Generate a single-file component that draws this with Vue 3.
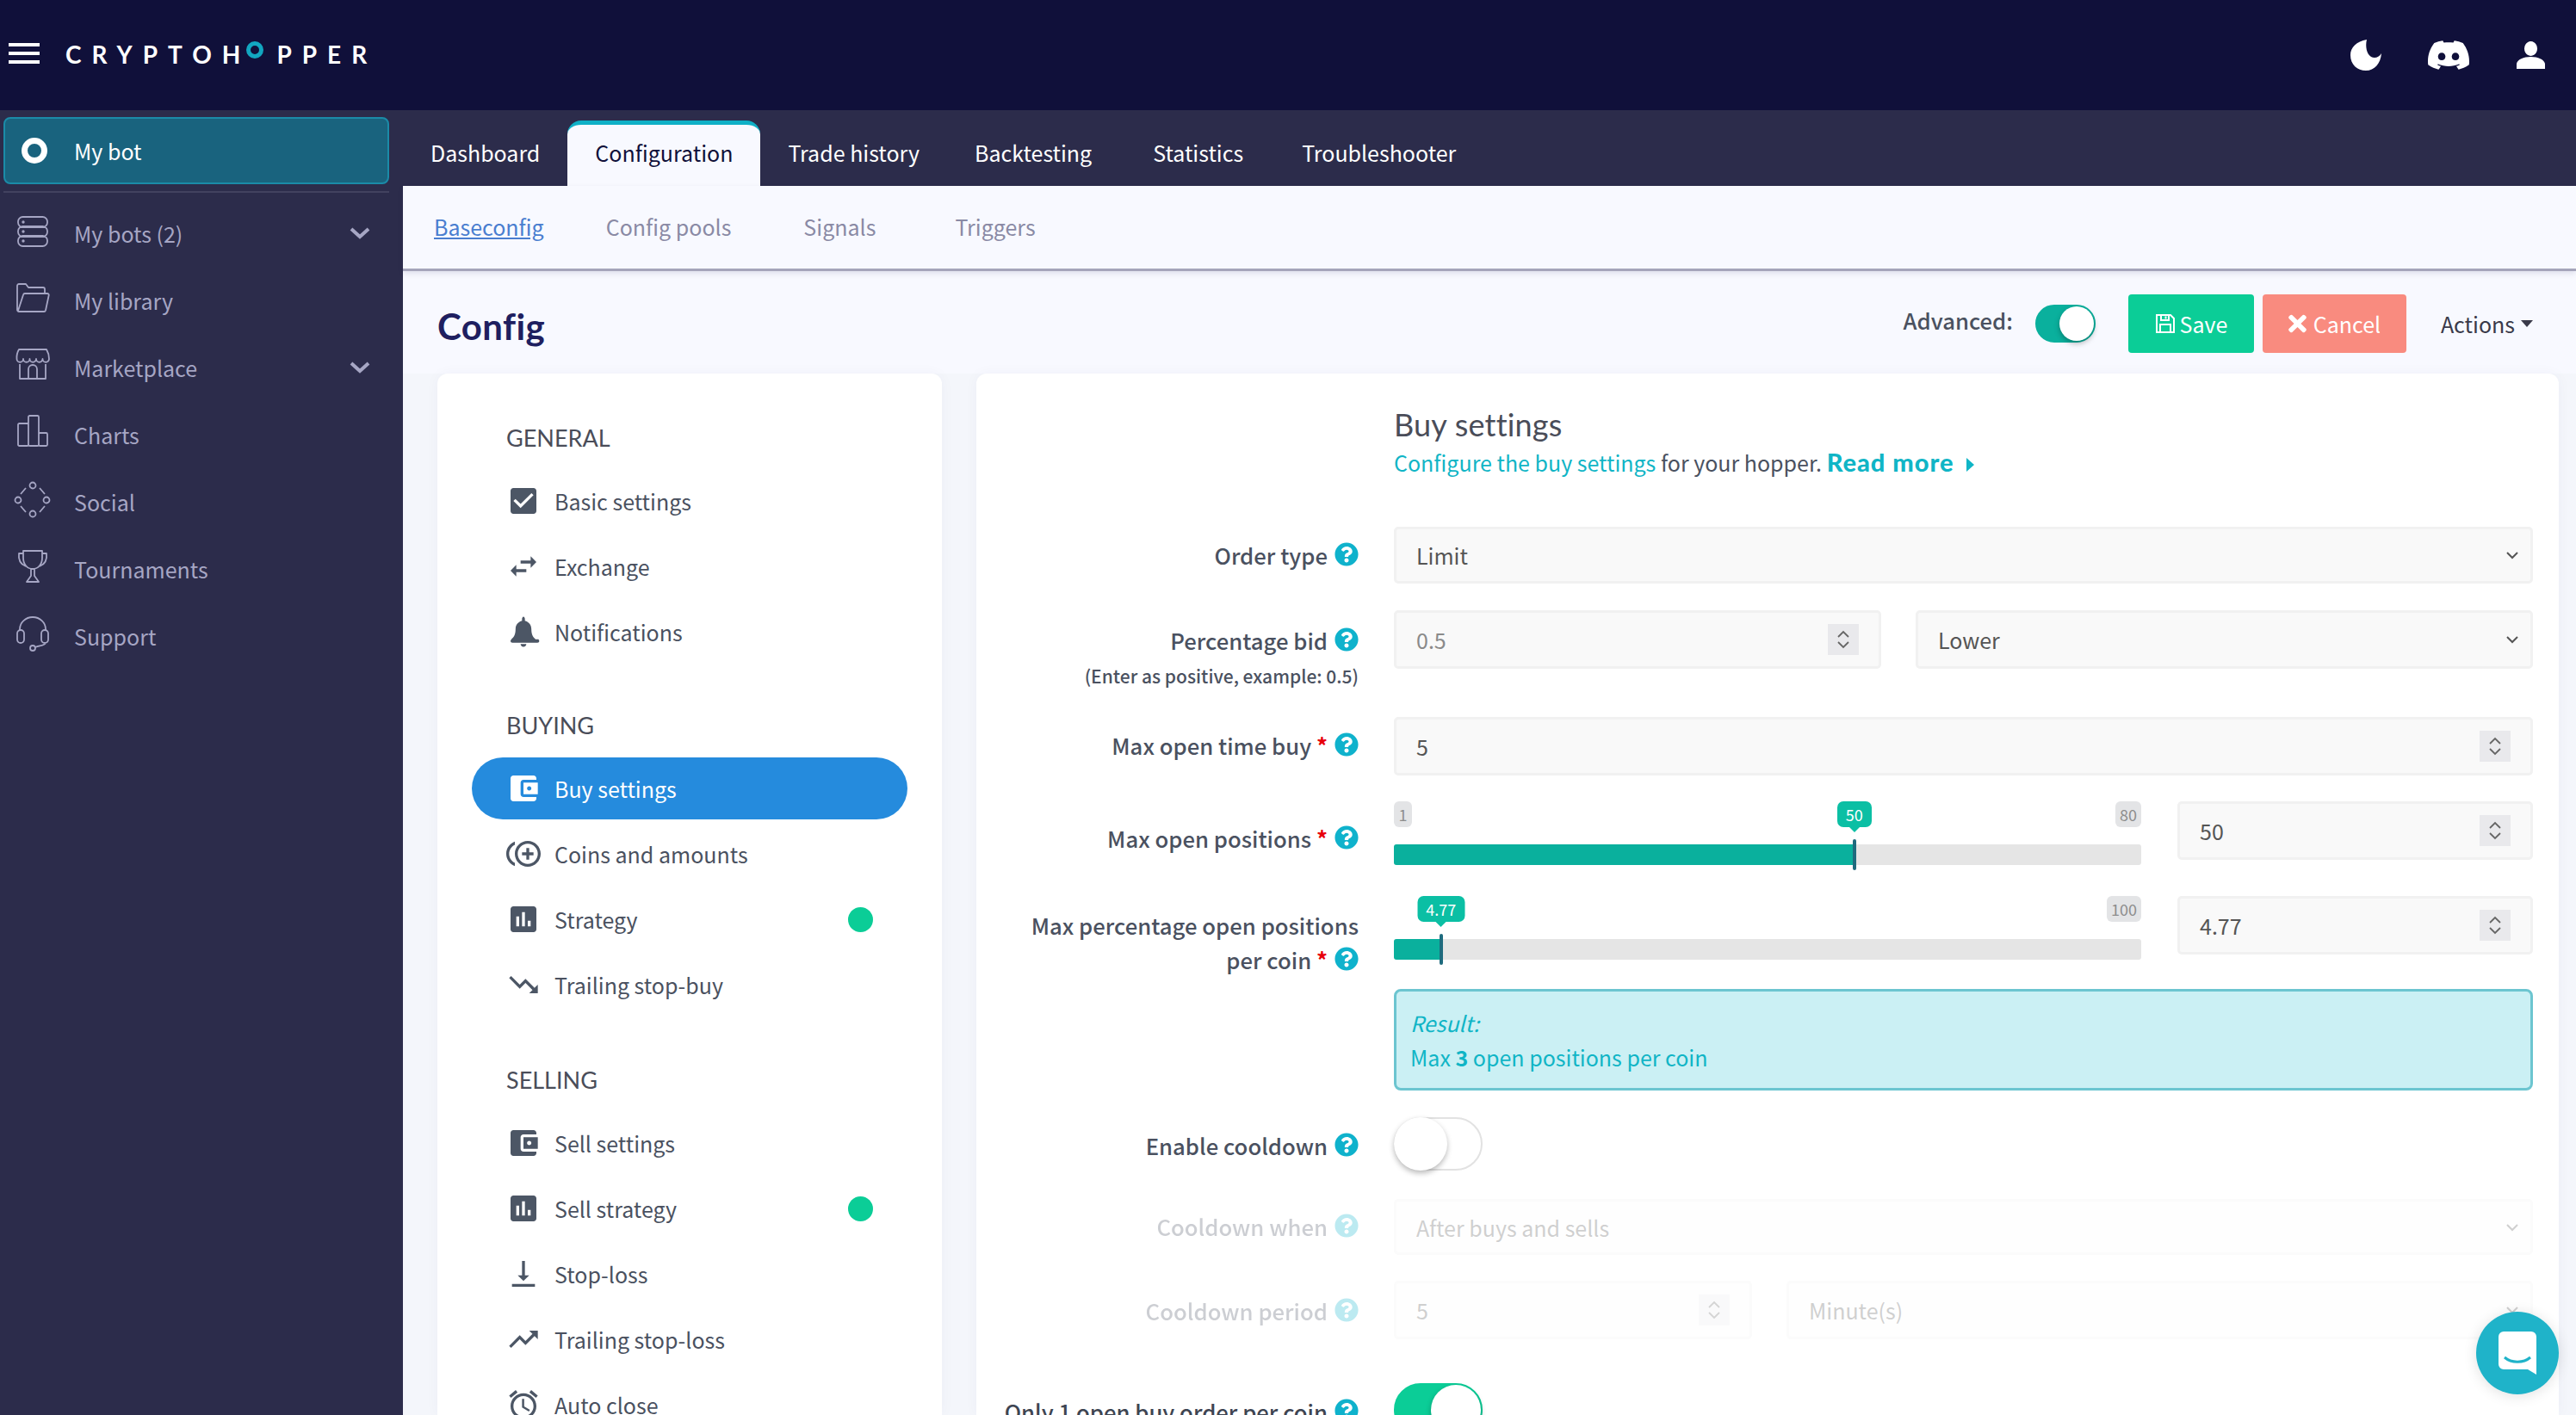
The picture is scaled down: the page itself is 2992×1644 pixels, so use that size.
<script setup>
const dot = (x, y, r) => `M${x - r} ${y}a${r} ${r} 0 1 0 ${2 * r} 0a${r} ${r} 0 1 0 ${-2 * r} 0Z`
const box = (x, y, w, h, r) =>
  `M${x + r} ${y}h${w - 2 * r}a${r} ${r} 0 0 1 ${r} ${r}v${h - 2 * r}a${r} ${r} 0 0 1 ${-r} ${r}h${2 * r - w}a${r} ${r} 0 0 1 ${-r} ${-r}v${2 * r - h}a${r} ${r} 0 0 1 ${r} ${-r}Z`

const sideItems = [
  {
    label: 'My bots (2)',
    more: true,
    d: box(3, 4, 34, 12, 5.5) + box(3, 15, 34, 12, 5.5) + box(3, 26, 34, 12, 5.5) + dot(9, 10, 0.8) + dot(9, 21, 0.8) + dot(9, 32, 0.8)
  },
  {
    label: 'My library',
    d: 'M4 36a2 2 0 0 1-2-2V6a2 2 0 0 1 2-2H12l3 4H32a2 2 0 0 1 2 2v5M4 36H33a2 2 0 0 0 2-1.500L38.500 18a2 2 0 0 0-2-3H11a2 2 0 0 0-2 1.500L3 35'
  },
  {
    label: 'Marketplace',
    more: true,
    d: 'M4 2H36Q39 7 39 13a3.750 3.750 0 0 1-7.500 0a3.750 3.750 0 0 1-7.500 0a3.750 3.750 0 0 1-7.500 0a3.750 3.750 0 0 1-7.500 0a3.750 3.750 0 0 1-7.500 0Q1 7 4 2ZM5 19V36H35V19M15 36V25a5 5 0 0 1 10 0V36'
  },
  {
    label: 'Charts',
    d: box(3, 10, 12, 26, 1.500) + box(15, 1, 12, 35, 1.500) + box(27, 21, 10, 15, 1.500)
  },
  {
    label: 'Social',
    d: dot(20, 4, 3.500) + dot(20, 37, 3.500) + dot(3, 21, 3.500) + dot(36, 21, 3.500) + 'M6 14L12 7M28 7L34 14M6 28L12 35M28 35L34 28'
  },
  {
    label: 'Tournaments',
    d: 'M9 2H31V10C31 18 26 23 20 23C14 23 9 18 9 10ZM9 5H4C3 13 7 18 12 20M31 5H36C37 13 33 18 28 20M18 23V31L13 38H27L22 31V23M13 38H27'
  },
  {
    label: 'Support',
    d: 'M5 17V15a15 14 0 0 1 30 0V17' + box(2, 16, 8, 15, 4) + box(30, 16, 8, 15, 4) + 'M35 31C34 34 28 34 23 36' + dot(20, 37, 3)
  }
]

const icons = {
  check: 'M19 3H5c-1.110 0-2 .9-2 2v14c0 1.100.89 2 2 2h14c1.110 0 2-.9 2-2V5c0-1.100-.89-2-2-2zm-9 14l-5-5 1.410-1.410L10 14.170l7.590-7.590L19 8l-9 9z',
  swap: 'M6.990 11L3 15l3.990 4v-3H14v-2H6.990v-3zM21 9l-3.990-4v3H10v2h7.010v3L21 9z',
  bell: 'M12 22.500c1.100 0 2-.9 2-2h-4c0 1.100.9 2 2 2zm8.400-5.300C19 15.800 17.500 14.500 17.500 10c0-2.800-2-5-4.500-5.600V3c0-.6-.4-1.500-1-1.500s-1 .9-1 1.500v1.400C8.500 5 6.500 7.200 6.500 10c0 4.500-1.500 5.800-2.900 7.200-.3.3-.6.8-.6 1.300 0 .6.500 1.200 1.300 1.200h17.400c.8 0 1.300-.6 1.300-1.200 0-.5-.3-1-.6-1.300z',
  wallet: 'M21 18v1c0 1.100-.9 2-2 2H5c-1.110 0-2-.9-2-2V5c0-1.100.89-2 2-2h14c1.100 0 2 .9 2 2v1h-9c-1.110 0-2 .9-2 2v8c0 1.100.9 2 2 2h9zm-9-2h10V8H12v8zm4-2.500c-.83 0-1.500-.67-1.500-1.500s.67-1.500 1.500-1.500 1.500.67 1.500 1.500-.67 1.500-1.500 1.500z',
  coins: 'M16 8h-2v3h-3v2h3v3h2v-3h3v-2h-3zM2 12c0-2.790 1.640-5.200 4.010-6.320V3.520C2.520 4.760 0 8.090 0 12s2.520 7.240 6.010 8.480v-2.160C3.640 17.200 2 14.790 2 12zm13-9c-4.960 0-9 4.040-9 9s4.040 9 9 9 9-4.040 9-9-4.040-9-9-9zm0 16c-3.860 0-7-3.140-7-7s3.140-7 7-7 7 3.140 7 7-3.140 7-7 7z',
  chart: 'M19 3H5c-1.100 0-2 .9-2 2v14c0 1.100.9 2 2 2h14c1.100 0 2-.9 2-2V5c0-1.100-.9-2-2-2zM9 17H7v-7h2v7zm4 0h-2V7h2v10zm4 0h-2v-4h2v4z',
  down: 'M16 18l2.290-2.290-4.880-4.880-4 4L2 7.410 3.410 6l6 6 4-4 6.300 6.290L22 12v6z',
  up: 'M16 6l2.290 2.290-4.880 4.880-4-4L2 16.590 3.410 18l6-6 4 4 6.300-6.290L22 12V6z',
  stop: 'M16 13h-3V3h-2v10H8l4 4 4-4zM4 19v2h16v-2H4z',
  alarm: 'M22 5.720l-4.600-3.860-1.290 1.530 4.600 3.860L22 5.720zM7.880 3.390L6.600 1.860 2 5.710l1.290 1.530 4.590-3.850zM12.500 8H11v6l4.750 2.850.75-1.230-4-2.370V8zM12 4c-4.970 0-9 4.030-9 9s4.030 9 9 9c4.970 0 9-4.030 9-9s-4.030-9-9-9zm0 16c-3.870 0-7-3.130-7-7s3.130-7 7-7 7 3.130 7 7-3.130 7-7 7z'
}

const menuGroups = [
  {
    title: 'GENERAL',
    items: [
      { label: 'Basic settings', icon: 'check' },
      { label: 'Exchange', icon: 'swap' },
      { label: 'Notifications', icon: 'bell' }
    ]
  },
  {
    title: 'BUYING',
    items: [
      { label: 'Buy settings', icon: 'wallet', active: true },
      { label: 'Coins and amounts', icon: 'coins' },
      { label: 'Strategy', icon: 'chart', dot: true },
      { label: 'Trailing stop-buy', icon: 'down' }
    ]
  },
  {
    title: 'SELLING',
    items: [
      { label: 'Sell settings', icon: 'wallet' },
      { label: 'Sell strategy', icon: 'chart', dot: true },
      { label: 'Stop-loss', icon: 'stop' },
      { label: 'Trailing stop-loss', icon: 'up' },
      { label: 'Auto close', icon: 'alarm' }
    ]
  }
]

const tabs = ['Dashboard', 'Configuration', 'Trade history', 'Backtesting', 'Statistics', 'Troubleshooter']
const subTabs = ['Baseconfig', 'Config pools', 'Signals', 'Triggers']

const helpIcon = 'M504 256c0 136.997-111.043 248-248 248S8 392.997 8 256C8 119.083 119.043 8 256 8s248 111.083 248 248zM262.655 90c-54.497 0-89.255 22.957-116.549 63.758-3.536 5.286-2.353 12.415 2.715 16.258l34.699 26.310c5.205 3.947 12.621 3.008 16.665-2.122 17.864-22.658 30.113-35.797 57.303-35.797 20.429 0 45.698 13.148 45.698 32.958 0 14.976-12.363 22.667-32.534 33.976C247.128 238.528 216 254.941 216 296v4c0 6.627 5.373 12 12 12h56c6.627 0 12-5.373 12-12v-1.333c0-28.462 83.186-29.647 83.186-106.667 0-58.002-60.165-102-116.531-102zM256 338c-25.365 0-46 20.635-46 46 0 25.364 20.635 46 46 46s46-20.636 46-46c0-25.365-20.635-46-46-46z'
const discord = 'M20.317 4.370a19.791 19.791 0 0 0-4.885-1.515.074.074 0 0 0-.079.037c-.211.375-.445.865-.608 1.250-1.845-.276-3.680-.276-5.487 0-.164-.393-.406-.874-.618-1.250a.077.077 0 0 0-.079-.037 19.736 19.736 0 0 0-4.885 1.515.070.070 0 0 0-.032.028C.533 9.046-.319 13.580.099 18.058a.082.082 0 0 0 .031.056c2.053 1.508 4.041 2.423 5.993 3.030a.078.078 0 0 0 .084-.028c.462-.630.873-1.295 1.226-1.994a.076.076 0 0 0-.042-.106c-.653-.248-1.274-.550-1.872-.892a.077.077 0 0 1-.008-.128c.126-.094.252-.192.372-.291a.074.074 0 0 1 .078-.011c3.928 1.793 8.180 1.793 12.061 0a.074.074 0 0 1 .079.010c.120.099.246.198.373.292a.077.077 0 0 1-.007.128 12.299 12.299 0 0 1-1.873.891.077.077 0 0 0-.041.107c.360.698.772 1.363 1.225 1.993a.076.076 0 0 0 .084.029c1.961-.607 3.950-1.522 6.002-3.030a.077.077 0 0 0 .031-.055c.500-5.177-.838-9.674-3.548-13.660a.061.061 0 0 0-.031-.029zM8.020 15.331c-1.183 0-2.157-1.086-2.157-2.419 0-1.333.956-2.419 2.157-2.419 1.211 0 2.176 1.095 2.157 2.419 0 1.333-.956 2.419-2.157 2.419zm7.975 0c-1.183 0-2.157-1.086-2.157-2.419 0-1.333.955-2.419 2.157-2.419 1.211 0 2.176 1.095 2.157 2.419 0 1.333-.946 2.419-2.157 2.419z'
const times = 'M242.720 256l100.070-100.070c12.280-12.280 12.280-32.190 0-44.480l-22.240-22.240c-12.280-12.280-32.190-12.280-44.480 0L176 189.280 75.930 89.210c-12.280-12.280-32.190-12.280-44.480 0L9.210 111.450c-12.280 12.280-12.280 32.190 0 44.480L109.280 256 9.210 356.070c-12.280 12.280-12.280 32.190 0 44.480l22.240 22.240c12.280 12.280 32.200 12.280 44.480 0L176 322.720l100.070 100.070c12.280 12.280 32.200 12.280 44.480 0l22.240-22.240c12.280-12.280 12.280-32.190 0-44.480L242.720 256z'

const positions = { min: 1, max: 80, value: 50, left: 61.6 }
const percent = { min: 1, max: 100, value: 4.77, left: 6.3 }
</script>

<template>
  <div class="page">
    <header class="topbar">
      <div class="burger"><i></i><i></i><i></i></div>
      <div class="logo">CRYPTOH<span class="logo-ring"></span>PPER</div>
      <div class="top-icons">
        <svg class="moon" viewBox="0 0 36 36"><path d="M19 0C7 2 0 9 0 18C0 29 8 36 18 36C28 36 35 28 36 16C33 21 28 22 24 20C19 17 17 8 19 0Z" /></svg>
        <svg class="discord" viewBox="0 0 24 24" preserveAspectRatio="none"><path :d="discord" /></svg>
        <svg class="user" viewBox="0 0 33 32"><path d="M16.500 0a7.500 8.500 0 1 0 .01 0ZM0 32V26C1 21 8 18 16.500 18S32 21 33 26V32Z" /></svg>
      </div>
    </header>

    <div class="body">
      <aside class="sidebar">
        <div class="current-bot">
          <span class="bot-ring"></span>
          <span>My bot</span>
        </div>
        <div class="side-divider"></div>
        <div v-for="item in sideItems" :key="item.label" class="side-item">
          <svg class="side-icon" viewBox="0 0 40 40"><path :d="item.d" /></svg>
          <span class="side-label">{{ item.label }}</span>
          <svg v-if="item.more" class="side-more" viewBox="0 0 24 14"><path d="M2 2L12 11L22 2" /></svg>
        </div>
      </aside>

      <main class="main">
        <nav class="tabs">
          <div v-for="tab in tabs" :key="tab" class="tab" :class="{ active: tab === 'Configuration' }">{{ tab }}</div>
        </nav>
        <nav class="subtabs">
          <a v-for="tab in subTabs" :key="tab" class="subtab" :class="{ current: tab === 'Baseconfig' }">{{ tab }}</a>
        </nav>

        <div class="content">
          <div class="page-head">
            <h1 class="page-title">Config</h1>
            <div class="head-actions">
              <span class="adv-label">Advanced:</span>
              <div class="switch small on-teal"><span class="knob"></span></div>
              <button class="btn save">
                <svg class="btn-icon" viewBox="0 0 24 24"><path d="M2 2H18L22 6V22H2ZM7 2V8H16V2M12.500 3.500V6.500M6 22V13H18V22" /></svg>
                Save
              </button>
              <button class="btn cancel">
                <svg class="btn-x" viewBox="0 0 352 512"><path :d="times" /></svg>
                Cancel
              </button>
              <div class="actions">Actions<span class="caret"></span></div>
            </div>
          </div>

          <div class="cards">
            <section class="card menu-card">
              <div v-for="group in menuGroups" :key="group.title" class="menu-group">
                <h3 class="menu-title">{{ group.title }}</h3>
                <div v-for="item in group.items" :key="item.label" class="menu-item" :class="{ active: item.active }">
                  <svg class="menu-icon" viewBox="0 0 24 24"><path :d="icons[item.icon]" /></svg>
                  <span>{{ item.label }}</span>
                  <span v-if="item.dot" class="green-dot"></span>
                </div>
              </div>
            </section>

            <section class="card form-card">
              <div class="form-head">
                <h2 class="form-title">Buy settings</h2>
                <p class="form-sub">
                  <span class="teal">Configure the buy settings</span> for your hopper.
                  <b class="read-more">Read more</b><span class="read-caret"></span>
                </p>
              </div>

              <div class="row r-order">
                <div class="label">Order type<svg class="help" viewBox="0 0 512 512"><path :d="helpIcon" /></svg></div>
                <div class="field">
                  <span>Limit</span>
                  <svg class="chev" viewBox="0 0 16 10"><path d="M2 2L8 8L14 2" /></svg>
                </div>
              </div>

              <div class="row r-bid">
                <div class="label">
                  Percentage bid<svg class="help" viewBox="0 0 512 512"><path :d="helpIcon" /></svg>
                  <div class="label-note">(Enter as positive, example: 0.5)</div>
                </div>
                <div class="pair">
                  <div class="field bid-input muted">
                    <span>0.5</span>
                    <span class="spin"><svg viewBox="0 0 16 24"><path d="M2 9L8 3L14 9M2 15L8 21L14 15" /></svg></span>
                  </div>
                  <div class="field grow">
                    <span>Lower</span>
                    <svg class="chev" viewBox="0 0 16 10"><path d="M2 2L8 8L14 2" /></svg>
                  </div>
                </div>
              </div>

              <div class="row r-time">
                <div class="label">Max open time buy <em class="req">*</em><svg class="help" viewBox="0 0 512 512"><path :d="helpIcon" /></svg></div>
                <div class="field">
                  <span>5</span>
                  <span class="spin"><svg viewBox="0 0 16 24"><path d="M2 9L8 3L14 9M2 15L8 21L14 15" /></svg></span>
                </div>
              </div>

              <div class="row r-pos">
                <div class="label">Max open positions <em class="req">*</em><svg class="help" viewBox="0 0 512 512"><path :d="helpIcon" /></svg></div>
                <div class="slider-pair">
                  <div class="slider">
                    <div class="limits"><span class="limit">{{ positions.min }}</span><span class="limit">{{ positions.max }}</span></div>
                    <div class="track">
                      <div class="fill" :style="{ width: positions.left + '%' }"></div>
                      <div class="thumb" :style="{ left: positions.left + '%' }"></div>
                      <div class="bubble" :style="{ left: positions.left + '%' }">{{ positions.value }}</div>
                    </div>
                  </div>
                  <div class="field value-input">
                    <span>{{ positions.value }}</span>
                    <span class="spin"><svg viewBox="0 0 16 24"><path d="M2 9L8 3L14 9M2 15L8 21L14 15" /></svg></span>
                  </div>
                </div>
              </div>

              <div class="row r-pct">
                <div class="label">Max percentage open positions<br />per coin <em class="req">*</em><svg class="help" viewBox="0 0 512 512"><path :d="helpIcon" /></svg></div>
                <div class="slider-pair">
                  <div class="slider">
                    <div class="limits end"><span class="limit">{{ percent.max }}</span></div>
                    <div class="track">
                      <div class="fill" :style="{ width: percent.left + '%' }"></div>
                      <div class="thumb" :style="{ left: percent.left + '%' }"></div>
                      <div class="bubble" :style="{ left: percent.left + '%' }">{{ percent.value }}</div>
                    </div>
                  </div>
                  <div class="field value-input">
                    <span>{{ percent.value }}</span>
                    <span class="spin"><svg viewBox="0 0 16 24"><path d="M2 9L8 3L14 9M2 15L8 21L14 15" /></svg></span>
                  </div>
                </div>
              </div>

              <div class="row r-result">
                <div></div>
                <div class="result">
                  <i>Result:</i>
                  <div>Max <b>3</b> open positions per coin</div>
                </div>
              </div>

              <div class="row r-enable">
                <div class="label">Enable cooldown<svg class="help" viewBox="0 0 512 512"><path :d="helpIcon" /></svg></div>
                <div class="switch large"><span class="knob"></span></div>
              </div>

              <div class="row r-when disabled">
                <div class="label">Cooldown when<svg class="help" viewBox="0 0 512 512"><path :d="helpIcon" /></svg></div>
                <div class="field">
                  <span>After buys and sells</span>
                  <svg class="chev" viewBox="0 0 16 10"><path d="M2 2L8 8L14 2" /></svg>
                </div>
              </div>

              <div class="row r-period disabled">
                <div class="label">Cooldown period<svg class="help" viewBox="0 0 512 512"><path :d="helpIcon" /></svg></div>
                <div class="pair">
                  <div class="field period-input">
                    <span>5</span>
                    <span class="spin"><svg viewBox="0 0 16 24"><path d="M2 9L8 3L14 9M2 15L8 21L14 15" /></svg></span>
                  </div>
                  <div class="field grow">
                    <span>Minute(s)</span>
                    <svg class="chev" viewBox="0 0 16 10"><path d="M2 2L8 8L14 2" /></svg>
                  </div>
                </div>
              </div>

              <div class="row r-only">
                <div class="label strong">Only 1 open buy order per coin<svg class="help" viewBox="0 0 512 512"><path :d="helpIcon" /></svg></div>
                <div class="switch large on-green"><span class="knob"></span></div>
              </div>
            </section>
          </div>
        </div>
      </main>
    </div>

    <div class="chat">
      <svg viewBox="0 0 44 50"><path d="M6 0H38a6 6 0 0 1 6 6V50L34 44H6a6 6 0 0 1-6-6V6a6 6 0 0 1 6-6Z" /><path class="smile" d="M7 30C15 37 29 37 37 30" /></svg>
    </div>
  </div>
</template>

<style scoped>
.page {
  position: relative;
  width: 2992px;
  height: 1644px;
  overflow: hidden;
  display: flex;
  flex-direction: column;
  font-family: "Noto Sans CJK SC", "Noto Sans", sans-serif;
  font-size: 25px;
  color: #4a5160;
  background: #f8f9ff;
}

/* top bar */
.topbar {
  flex: none;
  height: 128px;
  background: #10103a;
  display: flex;
  align-items: center;
  padding: 0 36px 0 10px;
  box-sizing: border-box;
}
.burger {
  width: 36px;
  height: 24px;
  display: flex;
  flex-direction: column;
  justify-content: space-between;
  margin-top: -4px;
}
.burger i {
  display: block;
  height: 4px;
  background: #fff;
}
.logo {
  margin-left: 30px;
  font-family: Lato, sans-serif;
  font-weight: 700;
  font-size: 28px;
  line-height: 28px;
  letter-spacing: 12px;
  color: #fff;
  display: flex;
  align-items: center;
  margin-top: -2px;
}
.logo-ring {
  width: 20px;
  height: 20px;
  border: 5px solid #12a6c0;
  border-radius: 50%;
  box-sizing: border-box;
  margin: -10px 15px 0 -5px;
}
.top-icons {
  margin-left: auto;
  display: flex;
  align-items: center;
  fill: #fff;
}
.moon { width: 36px; height: 36px; }
.discord { width: 48px; height: 44px; margin-left: 54px; }
.user { width: 33px; height: 32px; margin-left: 55px; }

.body {
  flex: 1;
  display: flex;
  min-height: 0;
}

/* left sidebar */
.sidebar {
  flex: none;
  width: 468px;
  background: #2c2c4b;
  padding: 8px 16px 0 4px;
  box-sizing: border-box;
}
.current-bot {
  height: 78px;
  box-sizing: border-box;
  border: 2px solid #1b8ba8;
  border-radius: 8px;
  background: #19637e;
  color: #fff;
  display: flex;
  align-items: center;
  padding-left: 19px;
}
.bot-ring {
  width: 30px;
  height: 30px;
  box-sizing: border-box;
  border: 7px solid #fff;
  border-radius: 50%;
  margin-right: 31px;
}
.side-divider {
  height: 2px;
  background: #42425f;
  margin: 8px 0;
}
.side-item {
  height: 78px;
  display: flex;
  align-items: center;
  padding-left: 14px;
  color: #a6a6c4;
}
.side-icon {
  width: 40px;
  height: 40px;
  margin: -6px 28px 0 0;
  overflow: visible;
  fill: none;
  stroke: #a6a6c4;
  stroke-width: 1.800;
  stroke-linejoin: round;
}
.side-more {
  width: 24px;
  height: 14px;
  margin-left: auto;
  margin-right: 22px;
  fill: none;
  stroke: #a6a6c4;
  stroke-width: 4;
}

/* tabs */
.main {
  flex: 1;
  min-width: 0;
  display: flex;
  flex-direction: column;
}
.tabs {
  flex: none;
  height: 88px;
  background: #2c2c4b;
  display: flex;
  align-items: flex-end;
  color: #fff;
}
.tab {
  height: 76px;
  box-sizing: border-box;
  padding: 0 32px 2px;
  display: flex;
  align-items: center;
  white-space: nowrap;
}
.tab:nth-child(5) { margin-left: 7px; }
.tab:nth-child(6) { margin-left: 4px; }
.tab.active {
  background: #f8f9ff;
  color: #10103a;
  border-top: 5px solid #0fb0c6;
  border-radius: 16px 16px 0 0;
  padding-bottom: 7px;
}
.subtabs {
  flex: none;
  height: 99px;
  box-sizing: border-box;
  display: flex;
  align-items: center;
  padding: 0 0 3px 36px;
  border-bottom: 3px solid #a5a5ba;
  box-shadow: 0 3px 6px rgba(60, 60, 110, 0.12);
  color: #8a8aa5;
  position: relative;
}
.subtab:nth-child(2) { margin-left: 72px; }
.subtab:nth-child(3) { margin-left: 84px; }
.subtab:nth-child(4) { margin-left: 92px; }
.subtab.current {
  color: #4a7ed0;
  text-decoration: underline;
}

/* page head */
.content {
  flex: 1;
  min-height: 0;
  display: flex;
  flex-direction: column;
}
.page-head {
  flex: none;
  height: 119px;
  display: flex;
  align-items: center;
  padding: 0 50px 0 40px;
  box-sizing: border-box;
}
.page-title {
  margin: 8px 0 0;
  font-family: Lato, sans-serif;
  font-size: 42px;
  font-weight: 700;
  letter-spacing: 0.4px;
  color: #1f1f60;
  line-height: 50px;
}
.head-actions {
  margin-left: auto;
  display: flex;
  align-items: center;
  margin-top: 2px;
}
.adv-label {
  font-weight: 500;
  font-size: 25.700px;
  margin: -8px 26px 0 0;
}
.switch {
  position: relative;
  border-radius: 999px;
  box-sizing: border-box;
  border: 2px solid #e2e2e2;
  background: #fff;
}
.switch.small { width: 70px; height: 44px; }
.switch.large { width: 103px; height: 62px; }
.switch .knob {
  position: absolute;
  top: -2px;
  left: -2px;
  bottom: -2px;
  aspect-ratio: 1;
  border-radius: 50%;
  background: #fff;
  box-shadow: 0 3px 6px rgba(0, 0, 0, 0.28);
}
.switch.on-teal { background: #0ab09d; border-color: #0ab09d; }
.switch.on-green { background: #0bcd97; border-color: #0bcd97; }
.switch.on-teal .knob,
.switch.on-green .knob {
  left: auto;
  top: 0;
  bottom: 0;
  right: 0;
}
.btn {
  height: 68px;
  border: 0;
  border-radius: 4px;
  color: #fff;
  font: inherit;
  display: flex;
  align-items: center;
  justify-content: center;
  padding: 0;
}
.btn.save { width: 146px; margin-left: 38px; background: #0bcd97; gap: 5px; }
.btn.cancel { width: 167px; margin-left: 10px; background: #f98b7f; gap: 8px; }
.btn-icon { width: 24px; height: 24px; fill: none; stroke: #fff; stroke-width: 2; }
.btn-x { width: 21px; height: 30px; fill: #fff; }
.actions {
  margin-left: 40px;
  color: #3a3a4a;
  display: flex;
  align-items: center;
}
.caret {
  margin-left: 7px;
  border: 7.500px solid transparent;
  border-top: 8px solid #3a3a4a;
  border-bottom: 0;
}

/* cards */
.cards {
  flex: 1;
  min-height: 0;
  display: flex;
  gap: 40px;
  padding: 0 20px 0 40px;
  background: #f4f6fb;
}
.card {
  background: #fff;
  border-radius: 12px 12px 0 0;
  box-shadow: 0 0 16px rgba(40, 50, 110, 0.04);
}
.menu-card {
  flex: none;
  width: 586px;
  box-sizing: border-box;
  padding-top: 56px;
}
.menu-group { margin-bottom: 54px; }
.menu-group:nth-child(2) { margin-bottom: 56px; }
.menu-title {
  margin: 0 0 18px 80px;
  font-family: Lato, sans-serif;
  font-size: 27px;
  font-weight: 400;
  line-height: 38px;
  color: #4a4d59;
}
.menu-item {
  height: 72px;
  margin: 0 40px 4px;
  padding: 0 40px;
  box-sizing: border-box;
  display: flex;
  align-items: center;
  border-radius: 36px;
}
.menu-item.active {
  background: #258bdd;
  color: #fff;
}
.menu-icon {
  flex: none;
  width: 40px;
  height: 40px;
  margin-right: 16px;
  fill: #4c5665;
}
.menu-item.active .menu-icon { fill: #fff; }
.green-dot {
  width: 29px;
  height: 29px;
  margin-left: auto;
  border-radius: 50%;
  background: #0bcd97;
}

/* form */
.form-card {
  flex: 1;
  min-width: 0;
  padding: 37px 30px 0 0;
}
.form-head { margin-left: 485px; }
.form-title {
  margin: 0 0 4px;
  font-family: Lato, sans-serif;
  font-size: 36px;
  font-weight: 400;
  letter-spacing: 0.2px;
  line-height: 44px;
  color: #4a4d59;
}
.form-sub {
  margin: 0;
  line-height: 36px;
  white-space: nowrap;
  color: #4a5160;
}
.teal { color: #10b5c6; }
.read-more {
  font-family: Lato, sans-serif;
  font-size: 29px;
  font-weight: 900;
  letter-spacing: 1px;
  color: #10b5c6;
}
.read-caret {
  display: inline-block;
  margin-left: 14px;
  border: 8px solid transparent;
  border-left: 9px solid #10b5c6;
  border-right: 0;
}
.row {
  display: grid;
  grid-template-columns: 444px 1fr;
  column-gap: 41px;
  align-items: start;
}
.label {
  text-align: right;
  font-weight: 500;
  font-size: 25.700px;
  line-height: 40px;
  white-space: nowrap;
}
.label-note {
  font-size: 21px;
  line-height: 36px;
  margin-top: 3px;
}
.req {
  color: #e8000b;
  font-style: normal;
  font-weight: 700;
}
.help {
  width: 28px;
  height: 28px;
  margin-left: 8px;
  vertical-align: -2px;
  fill: #0fb2cc;
}
.field {
  height: 68px;
  box-sizing: border-box;
  background: #f9f9f9;
  border: 3px solid #f1f1f1;
  border-radius: 5px;
  padding: 0 23px;
  display: flex;
  align-items: center;
  justify-content: space-between;
  color: #555;
}
.field.muted { color: #8a8a8a; }
.chev {
  width: 16px;
  height: 10px;
  fill: none;
  stroke: #555;
  stroke-width: 2;
  margin-right: -10px;
}
.spin {
  width: 36px;
  height: 36px;
  background: #e9e9ec;
  display: flex;
  align-items: center;
  justify-content: center;
}
.spin svg {
  width: 16px;
  height: 24px;
  fill: none;
  stroke: #666;
  stroke-width: 1.800;
}
.pair {
  display: flex;
  gap: 40px;
}
.grow { flex: 1; min-width: 0; }
.bid-input { width: 566px; }
.period-input { width: 416px; }
.slider-pair {
  display: flex;
  gap: 42px;
}
.slider {
  flex: none;
  width: 868px;
  height: 68px;
}
.limits {
  display: flex;
  justify-content: space-between;
  height: 30px;
}
.limits.end { justify-content: flex-end; }
.limit {
  min-width: 21px;
  padding: 0 5px;
  box-sizing: border-box;
  background: #e3e4e6;
  border-radius: 6px;
  color: #8d8d8d;
  font-size: 18px;
  line-height: 30px;
  text-align: center;
}
.track {
  position: relative;
  height: 24px;
  margin-top: 20px;
  background: #e5e5e5;
  border-radius: 3px;
}
.fill {
  height: 100%;
  background: #0ab09d;
  border-radius: 3px 0 0 3px;
}
.thumb {
  position: absolute;
  top: -6px;
  bottom: -6px;
  width: 4px;
  margin-left: -2px;
  border-radius: 2px;
  background: #1f6b7e;
}
.bubble {
  position: absolute;
  top: -50px;
  transform: translateX(-50%);
  padding: 0 10px;
  background: #0bbfa4;
  border-radius: 7px;
  color: #fff;
  font-size: 18px;
  line-height: 30px;
}
.bubble::after {
  content: "";
  position: absolute;
  left: 50%;
  bottom: -6px;
  margin-left: -6px;
  border: 6px solid transparent;
  border-top-color: #0bbfa4;
  border-bottom: 0;
}
.value-input { flex: 1; min-width: 0; }
.result {
  height: 118px;
  box-sizing: border-box;
  padding: 0 16px;
  display: flex;
  flex-direction: column;
  justify-content: center;
  gap: 4px;
  background: #cbf0f4;
  border: 3px solid #6cc5d0;
  border-radius: 8px;
  color: #10b5c6;
  line-height: 36px;
}
.disabled { opacity: 0.28; }
.r-order { margin-top: 57px; }
.r-order .label { padding-top: 13px; }
.r-order .field { height: 66px; }
.r-bid { margin-top: 31px; }
.r-bid .label { padding-top: 15px; }
.r-time { margin-top: 30px; }
.r-time .label { padding-top: 13px; }
.r-pos { margin-top: 30px; }
.r-pos .label { padding-top: 23px; }
.r-pct { margin-top: 42px; height: 68px; }
.r-pct .label { padding-top: 14px; }
.r-result { margin-top: 40px; }
.r-enable { margin-top: 31px; }
.r-enable .label { padding-top: 13px; }
.r-when { margin-top: 33px; }
.r-when .label { padding-top: 12px; }
.r-when .field { height: 65px; }
.r-period { margin-top: 30px; }
.r-period .label { padding-top: 15px; }
.r-only { margin-top: 51px; }
.r-only .label { padding-top: 13px; }
.label.strong { color: #3e4552; }

/* chat launcher */
.chat {
  position: absolute;
  right: 20px;
  bottom: 24px;
  width: 96px;
  height: 96px;
  border-radius: 50%;
  background: #1fb3c9;
  box-shadow: 0 2px 16px rgba(0, 0, 0, 0.12);
  display: flex;
  align-items: center;
  justify-content: center;
}
.chat svg {
  width: 44px;
  height: 50px;
  fill: #fff;
}
.chat .smile {
  fill: none;
  stroke: #1fb3c9;
  stroke-width: 3;
}
</style>

<style>
html, body {
  margin: 0;
  overflow: hidden;
}
</style>
